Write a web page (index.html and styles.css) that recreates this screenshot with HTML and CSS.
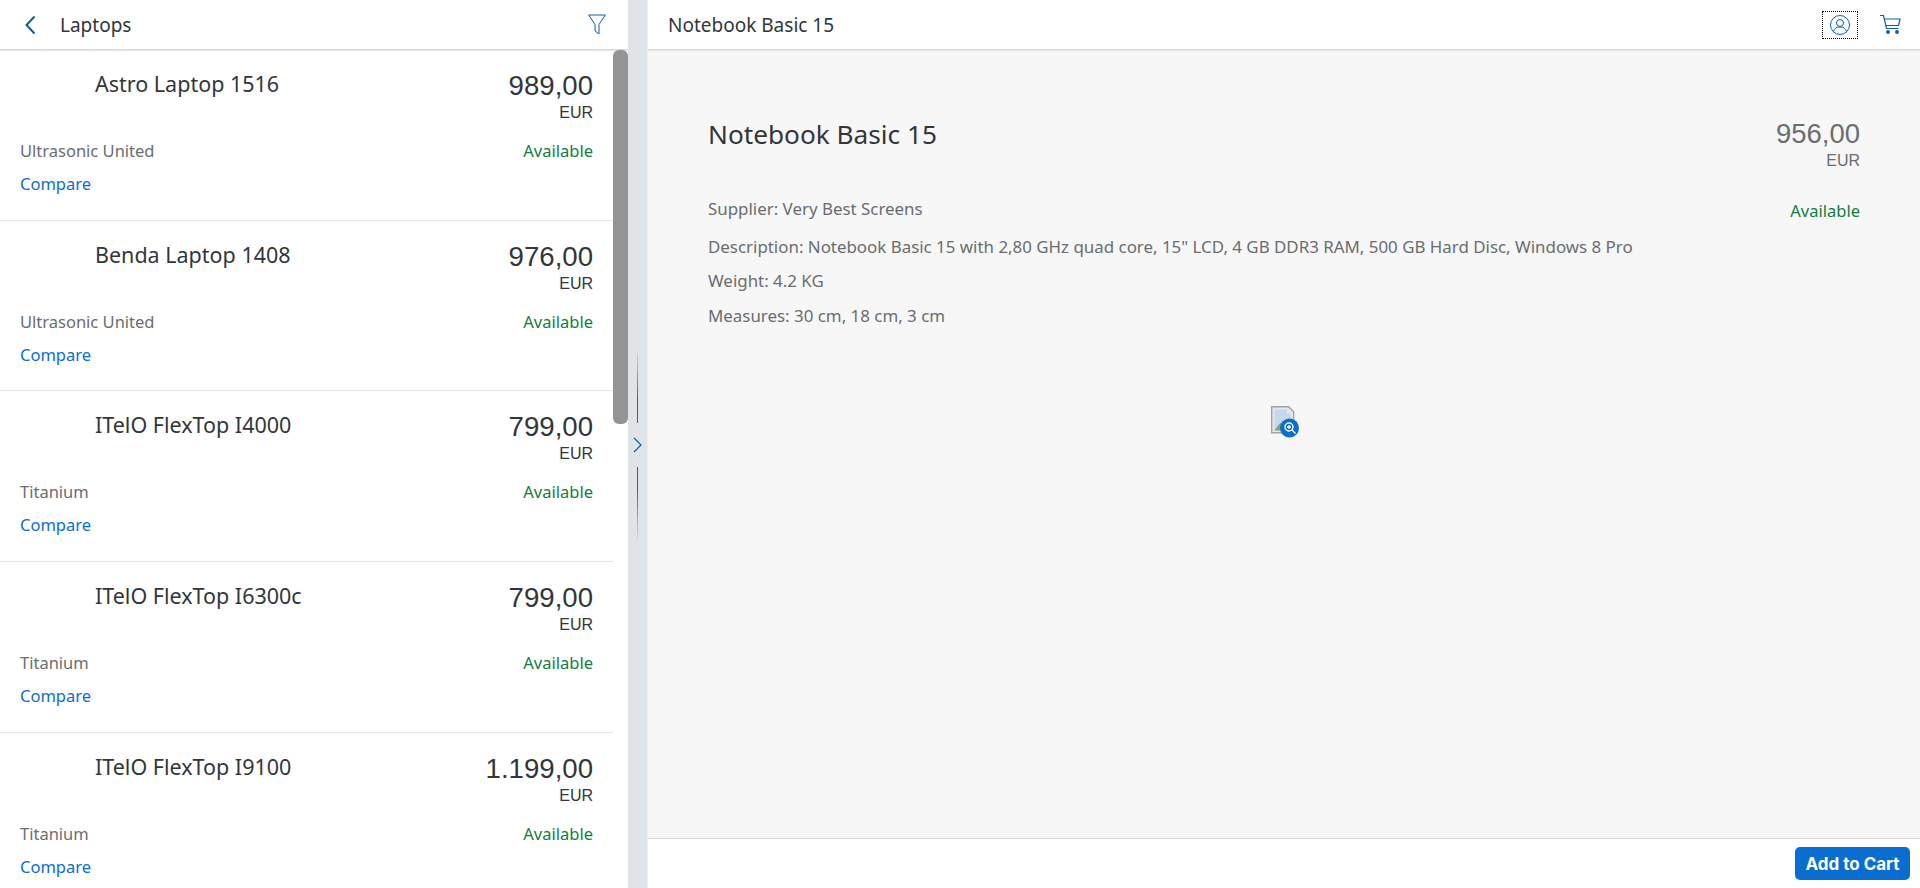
FILE: index.html
```html
<!DOCTYPE html>
<html lang="en">
<head>
  <meta charset="UTF-8">
  <title>Notebook Basic 15</title>
  <link rel="stylesheet" href="styles.css">
</head>
<body>
  <div class="app">
    <section class="master">
      <header class="bar master-bar">
        <svg class="back" viewBox="0 0 12 20" width="12" height="20"><path d="M10.500 1.500 2.500 10l8 8.500" fill="none" stroke="#0a5ea8" stroke-width="2"/></svg>
        <span class="bar-title">Laptops</span>
        <svg class="filter" viewBox="0 0 18 21" width="18" height="21"><path d="M.7 1h16.600L11 10.500V20l-4-3v-6.500z" fill="none" stroke="#0a5ea8" stroke-width="1"/></svg>
      </header>
      <div class="list-wrap">
        <div class="list">
          <div class="item">
            <div class="row"><span class="name">Astro Laptop 1516</span><span class="price">989,00</span></div>
            <div class="cur">EUR</div>
            <div class="row info"><span class="sup">Ultrasonic United</span><span class="ok">Available</span></div>
            <a class="link">Compare</a>
          </div>
          <div class="item">
            <div class="row"><span class="name">Benda Laptop 1408</span><span class="price">976,00</span></div>
            <div class="cur">EUR</div>
            <div class="row info"><span class="sup">Ultrasonic United</span><span class="ok">Available</span></div>
            <a class="link">Compare</a>
          </div>
          <div class="item">
            <div class="row"><span class="name">ITelO FlexTop I4000</span><span class="price">799,00</span></div>
            <div class="cur">EUR</div>
            <div class="row info"><span class="sup">Titanium</span><span class="ok">Available</span></div>
            <a class="link">Compare</a>
          </div>
          <div class="item">
            <div class="row"><span class="name">ITelO FlexTop I6300c</span><span class="price">799,00</span></div>
            <div class="cur">EUR</div>
            <div class="row info"><span class="sup">Titanium</span><span class="ok">Available</span></div>
            <a class="link">Compare</a>
          </div>
          <div class="item">
            <div class="row"><span class="name">ITelO FlexTop I9100</span><span class="price">1.199,00</span></div>
            <div class="cur">EUR</div>
            <div class="row info"><span class="sup">Titanium</span><span class="ok">Available</span></div>
            <a class="link">Compare</a>
          </div>
        </div>
        <div class="scroll"><div class="thumb"></div></div>
      </div>
    </section>

    <div class="split">
      <div class="grip grip-up"></div>
      <svg class="grip-arrow" viewBox="0 0 9 16" width="9" height="16"><path d="M1 1l7 7-7 7" fill="none" stroke="#0a5ea8" stroke-width="1.200"/></svg>
      <div class="grip grip-down"></div>
    </div>

    <section class="detail">
      <header class="bar detail-bar">
        <span class="bar-title">Notebook Basic 15</span>
        <div class="bar-icons">
          <span class="focus">
            <svg viewBox="0 0 22 22" width="22" height="22" fill="none" stroke="#0a5ea8" stroke-width="1"><circle cx="11" cy="11" r="9.500"/><circle cx="11" cy="9" r="3.500"/><path d="M4.500 17.500c1-3.500 3.500-4.500 6.500-4.500s5.500 1 6.500 4.500"/></svg>
          </span>
          <svg viewBox="0 0 22 22" width="22" height="22" fill="none" stroke="#0a5ea8" stroke-width="1.200"><path d="M0 1.500h3.500l3 13h12"/><path d="M4.500 5H20l-1.500 6.500H6"/><circle cx="8" cy="18" r="1.300" fill="#0a5ea8"/><circle cx="17" cy="18" r="1.300" fill="#0a5ea8"/></svg>
        </div>
      </header>
      <div class="content">
        <div class="head">
          <h2 class="title">Notebook Basic 15</h2>
          <div class="big-price">
            <div class="big-num">956,00</div>
            <div class="big-cur">EUR</div>
          </div>
        </div>
        <div class="attrs">
          <div class="attr-list">
            <p class="attr first">Supplier: Very Best Screens</p>
            <p class="attr">Description: Notebook Basic 15 with 2,80 GHz quad core, 15" LCD, 4 GB DDR3 RAM, 500 GB Hard Disc, Windows 8 Pro</p>
            <p class="attr">Weight: 4.2 KG</p>
            <p class="attr">Measures: 30 cm, 18 cm, 3 cm</p>
          </div>
          <span class="ok">Available</span>
        </div>
        <div class="pic">
          <svg viewBox="0 0 28 32" width="28" height="32">
            <path d="M.7.7h17l5 5v21H.7z" fill="#e6e6e6" stroke="#a3a3a3" stroke-width="1.400"/>
            <path d="M3.500 3.500h12.500v4h4v17H3.500z" fill="#c6d9ec"/>
            <path d="M3.500 24.500l6-8 6 8z" fill="#7fa36a"/>
            <circle cx="18.500" cy="22" r="9.500" fill="#0a6ed1"/>
            <circle cx="18" cy="21" r="4" fill="none" stroke="#fff" stroke-width="1.400"/>
            <path d="M21 24l3.500 3.500M16 21h4M18 19v4" stroke="#fff" stroke-width="1.300"/>
          </svg>
        </div>
      </div>
      <footer class="foot"><button class="btn">Add to Cart</button></footer>
    </section>
  </div>
</body>
</html>
```
FILE: styles.css
```css
* {
  box-sizing: border-box;
}

html, body {
  height: 100%;
}

body {
  margin: 0;
  overflow: hidden;
  font-family: 'Noto Sans', 'Liberation Sans', sans-serif;
  color: #32363a;
  background: #fff;
}

.app {
  display: flex;
  height: 888px;
}

.bar {
  display: flex;
  align-items: center;
  height: 50px;
  background: #fff;
  border-bottom: 1px solid #d9d9d9;
  box-shadow: 0 1px 1px #e8e8e8;
  font-size: 19px;
}

.bar-title {
  color: #32363a;
}

/* left list */
.master {
  display: flex;
  flex-direction: column;
  width: 628px;
  flex: none;
}

.master-bar {
  padding: 0 16px 0 24px;
}

.back {
  margin-right: 24px;
}

.filter {
  margin-left: auto;
  margin-right: 6px;
}

.list-wrap {
  display: flex;
  flex: 1;
  overflow: hidden;
}

.list {
  flex: 1;
  min-width: 0;
}

.item {
  height: 170.700px;
  padding: 17px 20px 0;
  border-bottom: 1px solid #e5e5e5;
}

.row {
  display: flex;
  justify-content: space-between;
  align-items: flex-start;
}

.name {
  margin-left: 75px;
  padding-top: 3px;
  font-size: 21.500px;
  line-height: 27px;
}

.price {
  margin-top: 3px;
  font-family: 'Liberation Sans', sans-serif;
  font-size: 27.600px;
  line-height: 32px;
}

.cur {
  width: fit-content;
  margin: 1px 0 0 auto;
  font-family: 'Liberation Sans', sans-serif;
  font-size: 16px;
  line-height: 20px;
}

.info {
  margin-top: 18px;
  font-size: 16.500px;
  line-height: 20px;
}

.sup {
  color: #6a6d70;
}

.ok {
  color: #107e3e;
  font-size: 16.500px;
}

.link {
  display: block;
  width: fit-content;
  margin-top: 13px;
  color: #0a6ed1;
  font-size: 16.500px;
  line-height: 20px;
}

.scroll {
  width: 15px;
  flex: none;
}

.thumb {
  width: 15px;
  height: 374px;
  background: #949494;
  border-radius: 6px;
}

/* splitter */
.split {
  display: flex;
  flex-direction: column;
  align-items: center;
  justify-content: center;
  width: 20px;
  flex: none;
  padding-top: 2px;
  background: #e1e4e6;
  border-right: 1px solid #eee;
}

.grip {
  width: 1px;
  height: 76px;
}

.grip-up {
  background: linear-gradient(transparent, #0a6ed1 70%);
}

.grip-down {
  background: linear-gradient(#0a6ed1 30%, transparent);
}

.grip-arrow {
  margin: 14px 0;
}

/* right panel */
.detail {
  display: flex;
  flex-direction: column;
  flex: 1;
  min-width: 0;
  background: #f7f7f7;
}

.detail-bar {
  justify-content: space-between;
  padding: 0 18px 0 20px;
}

.bar-icons {
  display: flex;
  align-items: center;
  gap: 22px;
}

.focus {
  display: flex;
  align-items: center;
  justify-content: center;
  width: 36px;
  height: 28px;
  border: 1px dotted #000;
}

.content {
  flex: 1;
  padding: 67px 60px 0;
}

.head {
  display: flex;
  justify-content: space-between;
}

.title {
  margin: 0;
  font-size: 26.200px;
  font-weight: 400;
  line-height: 34px;
}

.big-price {
  margin-top: 1px;
  text-align: right;
  color: #6a6d70;
  font-family: 'Liberation Sans', sans-serif;
}

.big-num {
  font-size: 27.500px;
  line-height: 32px;
}

.big-cur {
  margin-top: 1px;
  font-size: 16px;
  line-height: 20px;
}

.attrs {
  display: flex;
  justify-content: space-between;
  align-items: flex-start;
  margin-top: 28px;
  font-size: 16.900px;
  color: #6a6d70;
}

.attr {
  margin: 0 0 15px;
  line-height: 20px;
}

.attr.first {
  margin-bottom: 18px;
}

.attr:nth-child(2) {
  margin-bottom: 14px;
}

.pic {
  display: flex;
  justify-content: center;
  margin: 65px 0 0 2px;
}

.foot {
  display: flex;
  justify-content: flex-end;
  align-items: center;
  height: 50px;
  padding-right: 10px;
  background: #fff;
  border-top: 1px solid #d9d9d9;
}

.btn {
  height: 33px;
  width: 115px;
  border: 0;
  border-radius: 5px;
  background: #0a6ed1;
  color: #fff;
  font-family: Inter, 'Liberation Sans', sans-serif;
  font-size: 17px;
  font-weight: 700;
}
```
